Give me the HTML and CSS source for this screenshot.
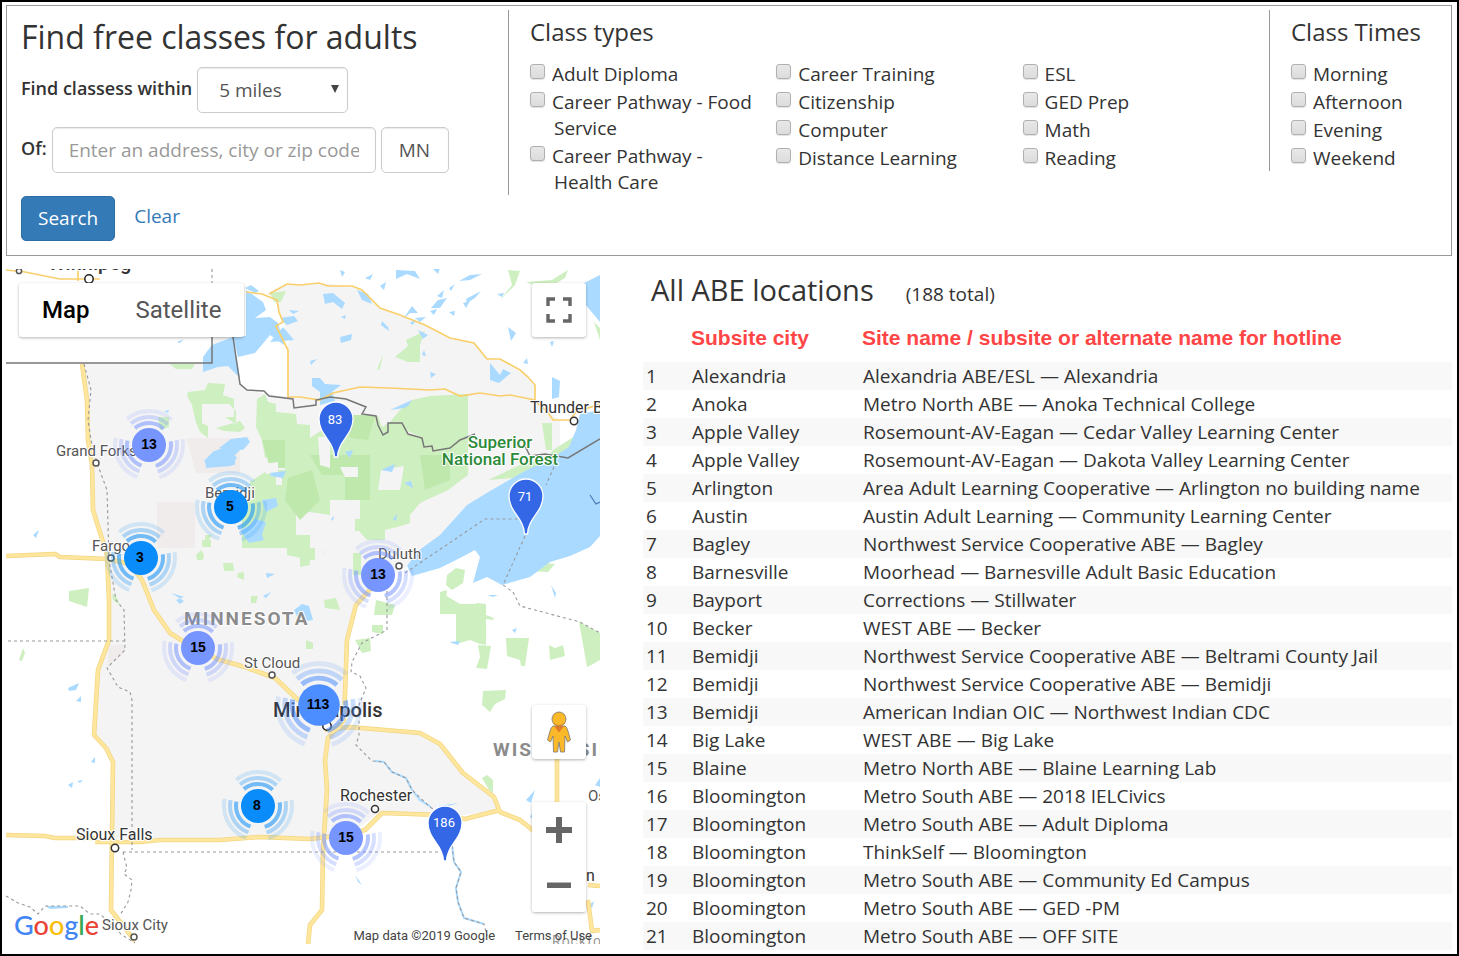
FILE: index.html
```html
<!DOCTYPE html>
<html lang="en">
<head>
<meta charset="utf-8">
<title>Find free classes for adults</title>
<link rel="stylesheet" href="styles.css">
</head>
<body>
<form class="finder" action="#">
  <div class="search">
    <h1 class="title">Find free classes for adults</h1>
    <div class="field-row">
      <label class="field-label" for="radius">Find classess within</label>
      <span class="select-wrap">
        <select class="control radius" id="radius"><option>5 miles</option><option>10 miles</option><option>25 miles</option></select>
      </span>
    </div>
    <div class="field-row">
      <label class="field-label" for="address">Of:</label>
      <input class="control address" id="address" type="text" placeholder="Enter an address, city or zip code">
      <input class="control state" type="text" value="MN" aria-label="State">
    </div>
    <div class="actions">
      <button class="submit" type="submit">Search</button>
      <a class="clear" href="#">Clear</a>
    </div>
  </div>
  <fieldset class="group">
    <legend class="group-title">Class types</legend>
    <div class="columns">
      <div class="checks">
        <label class="check"><input type="checkbox"> Adult Diploma</label>
        <label class="check"><input type="checkbox"> Career Pathway - Food Service</label>
        <label class="check"><input type="checkbox"> Career Pathway - Health Care</label>
      </div>
      <div class="checks">
        <label class="check"><input type="checkbox"> Career Training</label>
        <label class="check"><input type="checkbox"> Citizenship</label>
        <label class="check"><input type="checkbox"> Computer</label>
        <label class="check"><input type="checkbox"> Distance Learning</label>
      </div>
      <div class="checks">
        <label class="check"><input type="checkbox"> ESL</label>
        <label class="check"><input type="checkbox"> GED Prep</label>
        <label class="check"><input type="checkbox"> Math</label>
        <label class="check"><input type="checkbox"> Reading</label>
      </div>
    </div>
  </fieldset>
  <fieldset class="group">
    <legend class="group-title">Class Times</legend>
    <div class="checks">
      <label class="check"><input type="checkbox"> Morning</label>
      <label class="check"><input type="checkbox"> Afternoon</label>
      <label class="check"><input type="checkbox"> Evening</label>
      <label class="check"><input type="checkbox"> Weekend</label>
    </div>
  </fieldset>
</form>

<main class="results">
  <section class="map" aria-label="Map of class locations">
    <svg class="map-canvas" viewBox="6 269 594 675">
      <defs>
        <g id="cluster">
          <g fill="none" stroke="currentColor" stroke-dasharray="82 38" stroke-dashoffset="10">
            <circle r="22" stroke-width="4" opacity=".55" pathLength="360"/>
            <circle r="28" stroke-width="4" opacity=".3" pathLength="360"/>
            <circle r="34" stroke-width="4" opacity=".15" pathLength="360"/>
          </g>
          <circle r="17" fill="currentColor"/>
        </g>
        <path id="pin" d="M-1.500 0C-2-16-17-22-17-38A17 17 0 0 1 17-38C17-22 2-16 1.500 0Z" fill="#3367e6" stroke="#fff" stroke-width="1.3"/>
      </defs>
      <rect x="6" y="269" width="594" height="675" fill="#fff"/>

      <!-- highlighted land -->
      <path fill="#f4f4f4" d="M82 364H212V337H233L240 384 250 391 288 397 287 350 289 340 283 322 276 300 268 293 287 284H300L320 283 352 286 362 290 380 308 400 315 425 325 450 338 474 343 487 358 500 359 520 372 528 377 535 385V400L545 410 560 420V455L500 490 430 545 405 568 375 580 355 605 345 640 343 727 420 735 440 745 465 775 495 798 500 811 445 817 380 812 345 838H113V760L94 735 97 670 108 640 108 560 92 500Z"/>
      <path fill="#f0eceb" d="M186 438H240V473H196ZM157 502H195V548H157ZM108 645H125V652L108 667Z"/>

      <!-- forests and parks -->
      <g fill="#ceefc0">
        <path d="M170 364H195L192 369H176ZM188 392 205 390 208 383 225 384 223 395 234 399V417H225L236 424 236 411 229 404H202V423L208 426V438L200 432 196 423 192 405 187 396ZM216 428 240 421 245 428 240 432 224 431ZM158 417H169V427L160 430ZM257 399 265 394 268 402 276 404V412L287 413 296 414 297 424 310 425V438L325 428 330 418H350L378 416 382 427 390 422 402 424 407 434 422 438 425 445 432 445 433 451 450 448 468 437V475L448 490 420 503 410 515V523L401 526 385 530V540H367L360 532V490L345 492V503L330 505V515L310 512 290 516 285 510 268 515 255 505 250 492V482L268 470H285L284 450 265 458 262 440 256 427ZM390 422 400 410 412 400 430 396 468 394V444L450 448 435 451 424 444 420 437Z"/>
        <path d="M242 500H258L278 495 296 505V535H310V565L300 567V558L287 555V548H242ZM205 535H212L209 540H211V547H202V540H205ZM196 555 201 550 204 555 203 560H197ZM223 563H233L234 571H224ZM238 573 244 572V580L237 577ZM251 596H258L256 603H251ZM355 519H368V531H355ZM324 600 336 598 340 610 325 608ZM300 548H315V560H300ZM306 640 313 643V649H306ZM353 553H361V575H353ZM376 600 395 605 392 615H374ZM372 625H383V634L372 632ZM355 640 370 638 371 651 362 653ZM440 592 447 590 446 600 440 602V592L460 604H475L477 603 486 604V615L494 618 493 620 486 619V645L480 644 470 640 456 644V614H440ZM447 575 456 568 465 570 463 583 452 590 446 585ZM506 638H529L525 666H521L520 660 507 656ZM549 645 555 648 563 645 565 656 550 660ZM579 622 600 633V660L593 664 587 667ZM478 645 491 646 487 669 476 668 480 657ZM483 691 506 690 505 699 495 704 490 712 482 705ZM69 591 89 588 87 607 78 604 69 601ZM23 648 25 653 22 661 19 660ZM482 778 487 775 493 780V793L489 790ZM112 594 116 596 120 605 113 600ZM553 450 575 436 570 449 560 457 545 460Z"/>
        <path d="M488 480 522 464 545 459 530 470 515 478ZM576 470 587 456 600 451V462L586 468ZM530 571 545 563 555 564 548 572ZM270 293 286 291 281 302 274 302ZM395 357 408 346 406 340 425 331 420 345V362H408ZM377 370 383 354 380 369ZM500 300 512 285 508 270 520 271 515 285ZM526 282 552 280 568 270 565 278 545 290ZM594 322 600 328V340ZM542 423H552V450H546Z"/>
      </g>
      <g fill="#bfe8ad">
        <path d="M310 455H370V500H345V475H322ZM288 478 312 470 320 500 300 520 285 500ZM420 455H450V480L425 490ZM262 440H285V468H270ZM345 415H375L368 440 350 438Z"/>
      </g>
      <path fill="#f4f4f4" d="M340 467 358 467V477H345ZM381 470 404 466 400 490H378ZM318 437H330V468L320 465ZM262 464 278 462V472L266 474ZM330 500H348V508H330ZM276 472H282V485H276Z"/>

      <!-- lakes -->
      <g fill="#aadaff">
        <path d="M600 410 580 414 576 430 569 447 553 457 525 471 490 491 467 505 440 535 418 551 407 566 412 576 440 568 462 557 475 550 480 557 473 583 487 577 502 585 530 577 550 562 570 556 590 547 600 536Z"/>
        <path d="M212 345 233 337 240 378 228 366 218 367 203 372V357L208 350ZM233 337 246 336V290L263 302 266 310 255 318 270 317 278 323 284 345 270 335 255 353 238 357ZM204 461 213 452 224 447 240 450 225 465 235 461 235 465H207ZM219 448 231 439 247 437 250 442 243 450 228 449Z"/>
        <path d="M205 460 214 451 229 450 237 458 231 466 206 468ZM240 530 250 525 255 519 266 522 262 535 264 540 249 543ZM262 500 276 498 278 506 266 512ZM294 610 302 604 309 606 313 620 300 622ZM270 473 286 471 283 478 271 476ZM312 378H320L325 384 341 385 332 392 335 401 320 405V392L312 386ZM323 294 333 293 345 303 342 309 333 302 325 304ZM357 290 368 294 372 304 362 300ZM382 321 388 327 389 331 381 325ZM340 337 352 334 351 340 341 343ZM403 319 412 306 418 313 410 313ZM396 270 415 271 420 279 407 274 396 279ZM459 281 470 275 482 274 470 280ZM466 299 481 291 475 298 467 303ZM490 363 500 375 503 369 511 373 499 383 490 380ZM497 294 504 293 502 297ZM572 289 600 275V322L590 310ZM508 327 516 333 511 341ZM523 363 527 358 528 364ZM552 377 560 381 559 397 552 399ZM431 308 438 300 447 298 440 308ZM431 267 440 268 438 274ZM449 312 455 311 454 316ZM289 310 299 311 293 314ZM251 285 259 291 255 293 245 288ZM280 318 294 316 298 321 287 325ZM177 342 184 339 180 343ZM270 342 283 327 294 340ZM393 519 397 514 396 521ZM331 519 334 516 333 521ZM322 556 327 547 324 553ZM512 630 517 628 515 633ZM449 642 460 641 458 645ZM551 585 556 593 555 598ZM487 595 498 595 493 597ZM33 535 39 530 36 538ZM171 593 184 601 180 604 176 600 184 597ZM266 573 275 574 267 578ZM263 596 271 592 266 598ZM68 688 79 683 76 690 69 691ZM76 701 81 696 81 702ZM91 762 95 757V763ZM68 785 73 782 72 788ZM77 781 83 780 80 783ZM526 800 535 790 531 803ZM530 817 534 810V820ZM595 785 600 778V787ZM355 875 362 885 358 882ZM589 905 594 901 592 908ZM45 906H68V908L50 909ZM437 806 459 803 445 807ZM164 411 169 410 168 413ZM390 410 412 400 408 406 404 408ZM424 350 426 356 422 355ZM430 372 436 374 431 378ZM345 452 353 450 350 458ZM381 470 395 464 392 472ZM404 483 411 481 413 488Z"/>
        <path d="M410 323 416 319 413 325ZM415 318 426 317 420 322ZM418 330 428 335 423 339ZM340 270 345 272 342 277ZM365 278 373 274 370 280ZM380 286 386 282 384 290ZM437 296 444 290 442 298ZM449 288 455 284 451 291ZM430 311 437 309 434 315ZM463 303 470 301 466 308ZM310 361 317 359 311 365ZM341 317 346 315 345 319ZM550 342 554 341 552 347Z"/>
      </g>

      <!-- rivers -->
      <path fill="none" stroke="#aadaff" stroke-width="2" d="M375 761 384 762 392 772 406 778 412 790 420 800 431 807M452 845 454 862 461 872 456 888 458 902 464 918 484 924"/>

      <!-- thin roads -->
      <g fill="none" stroke="#f9cf6b" stroke-width="1.7">
        <path d="M6 270 25 272 60 279H100M78 269V281M246 292 262 294 277 300 279 312 283 322 276 326 288 350 288 397H300L320 400 333 393 342 391 360 387 390 388 430 390 445 389 460 396 480 393 500 396 510 395 525 398 535 400V385L528 377 520 370 500 359H487L474 343 450 338 425 325 400 315 380 308 362 290 352 286H328L319 283 300 285 287 284 269 294M537 403 547 411 553 420 570 420 576 412 600 404"/>
      </g>

      <!-- highways -->
      <g fill="none" stroke-linejoin="round">
        <g stroke="#f3d583" stroke-width="4.6">
          <path d="M82 364 87 400 88 440 92 465 93 510 107 555 109 600V640L98 670 94 735 106 748 113 762 112 835 111 910 135 941"/>
          <path d="M6 556 55 554 60 557 108 559 130 564 142 580 154 610 170 633 197 650 220 660 245 667 275 678 295 697 315 715 325 722"/>
          <path d="M376 583 356 605 347 640 344 720 328 738 325 760 327 790 323 850 322 910 310 925 308 944"/>
          <path d="M325 730 350 727 420 733 440 744 463 773 494 797 500 812 520 820 535 832M6 835 45 836 55 838H95M95 842H140L160 840 220 840 260 837 310 839 345 835 365 830 382 813 440 815 465 819 500 810M557 758V802M588 885 600 886M588 900 592 931 600 930"/>
        </g>
        <g stroke="#fee69c" stroke-width="3.2">
          <path d="M82 364 87 400 88 440 92 465 93 510 107 555 109 600V640L98 670 94 735 106 748 113 762 112 835 111 910 135 941"/>
          <path d="M6 556 55 554 60 557 108 559 130 564 142 580 154 610 170 633 197 650 220 660 245 667 275 678 295 697 315 715 325 722"/>
          <path d="M376 583 356 605 347 640 344 720 328 738 325 760 327 790 323 850 322 910 310 925 308 944"/>
          <path d="M325 730 350 727 420 733 440 744 463 773 494 797 500 812 520 820 535 832M6 835 45 836 55 838H95M95 842H140L160 840 220 840 260 837 310 839 345 835 365 830 382 813 440 815 465 819 500 810M557 758V802M588 885 600 886M588 900 592 931 600 930"/>
        </g>
      </g>

      <!-- borders -->
      <path fill="none" stroke="#777" stroke-width="1.5" d="M6 363H212V337M233 337 240 384 247 390 264 391 269 396 293 399 294 408 316 405 316 400 330 397 346 399 366 407 362 414 376 416 378 425 383 435 388 432 388 423 402 423 408 434 422 438 424 447 432 446 433 451 450 448 460 440 475 434M525 446 530 456 545 454 568 458 600 439"/>
      <g fill="none" stroke="#999" stroke-width="1.1" stroke-dasharray="3 3">
        <path d="M212 269V283M84 364 91 390 88 420 91 440 97 463 107 490 109 560 116 600 124 610 125 650 107 668 118 687 130 692 132 700V850M8 641H125M123 852H445M123 852 127 868 124 874 132 880 131 890 128 902 120 915M6 896 18 903 30 907 38 914 45 906 80 906 90 914 100 914 122 935 135 943M405 573 485 519H520M554 467 546 485M525 536 503 585 513 592 520 606 580 622 600 633M387 585V630L362 643 352 662 351 672 360 676 366 688 359 705V735L356 745 372 761 384 762 392 772 406 778 412 790 430 807 447 818 452 845 454 862 461 872 456 888 458 902 464 918 484 924 487 936"/>
      </g>
      <path fill="none" stroke="#4d79b8" stroke-width="1.2" d="M590 495 596 504 600 502"/>

      <!-- place labels -->
      <g class="places">
        <text class="city-bold" x="48" y="270">Winnipeg</text>
        <text x="56" y="456" class="town">Grand Forks</text>
        <text x="205" y="498" class="town">Bemidji</text>
        <text x="92" y="551" class="town">Fargo</text>
        <text x="378" y="559" class="town">Duluth</text>
        <text x="244" y="668" class="town">St Cloud</text>
        <text x="102" y="930" class="town">Sioux City</text>
        <text x="530" y="413" class="city">Thunder B</text>
        <text x="76" y="840" class="city">Sioux Falls</text>
        <text x="340" y="801" class="city">Rochester</text>
        <text x="588" y="801" class="town">Os</text>
        <text x="586" y="881" class="city">n</text>
        <text x="552" y="946" class="faint">Rockford</text>
        <text x="273" y="717" class="city-bold">Minneapolis</text>
        <text x="184" y="625" class="state-name">MINNESOTA</text>
        <text x="493" y="756" class="state-name">WISCONSIN</text>
        <text x="500" y="448" class="forest" text-anchor="middle">Superior</text>
        <text x="500" y="465" class="forest" text-anchor="middle">National Forest</text>
      </g>
      <g fill="#fff" stroke="#555" stroke-width="1.5">
        <circle cx="19" cy="271" r="2.6"/><circle cx="89" cy="279" r="4.2" stroke="#222"/><circle cx="96" cy="463" r="3"/><circle cx="111" cy="558" r="3"/><circle cx="399" cy="566" r="3"/><circle cx="272" cy="675" r="3"/><circle cx="134" cy="937" r="3"/><circle cx="574" cy="421" r="3.7" stroke="#333"/><circle cx="115" cy="848" r="3.7" stroke="#333"/><circle cx="375" cy="809" r="3.5" stroke="#333"/><circle cx="327" cy="726" r="4.2" stroke="#222"/>
      </g>

      <!-- clusters and pins -->
      <g class="cluster-violet">
        <use href="#cluster" x="149" y="445"/><use href="#cluster" x="378" y="575"/><use href="#cluster" x="198" y="648"/><use href="#cluster" x="346" y="838"/>
      </g>
      <g class="cluster-blue">
        <use href="#cluster" x="231" y="507"/><use href="#cluster" x="141" y="558"/><use href="#cluster" x="258" y="806"/>
      </g>
      <g class="cluster-large"><use href="#cluster" transform="translate(319 705) scale(1.22)"/></g>
      <g class="count">
        <text x="149" y="449">13</text><text x="378" y="579">13</text><text x="198" y="652">15</text><text x="346" y="842">15</text><text x="230" y="511">5</text><text x="140" y="562">3</text><text x="257" y="810">8</text><text x="318" y="709">113</text>
      </g>
      <use href="#pin" x="336" y="457"/><use href="#pin" x="526" y="534"/><use href="#pin" x="445" y="861"/>
      <g class="pin-count">
        <text x="335" y="424">83</text><text x="525" y="501">71</text><text x="444" y="827">186</text>
      </g>
    </svg>
    <div class="map-types">
      <button class="map-type map-type-on" type="button">Map</button>
      <button class="map-type" type="button">Satellite</button>
    </div>
    <button class="map-button fullscreen" type="button" aria-label="Toggle fullscreen view">
      <svg width="26" height="26" viewBox="0 0 26 26" fill="none" stroke="#666" stroke-width="3.4"><path d="M2 9V2H9M17 2H24V9M24 17V24H17M9 24H2V17"/></svg>
    </button>
    <div class="map-tools">
      <button class="map-button" type="button" aria-label="Show Street View coverage">
        <svg width="26" height="42" viewBox="0 0 26 42"><path d="M7 15H19Q21 16 22 20L24.500 29 21.500 31 19 25 18.500 41H14.500L13 31 11.500 41H7.500L7 25 4.500 31 1.500 29 4 20Q5 16 7 15Z" fill="#fbb829" stroke="#777" stroke-width=".8"/><path d="M8 15H18L13 21.500Z" fill="#e07b2c"/><circle cx="13" cy="8" r="7" fill="#fbb829" stroke="#777" stroke-width=".8"/><path d="M7 12Q13 17 19 12" stroke="#d98d1f" fill="none"/></svg>
      </button>
      <div class="zoom">
        <button class="zoom-button" type="button" aria-label="Zoom in"><svg width="26" height="26" viewBox="0 0 26 26"><path d="M10 0H16V10H26V16H16V26H10V16H0V10H10Z" fill="#666"/></svg></button>
        <button class="zoom-button" type="button" aria-label="Zoom out"><svg width="26" height="26" viewBox="0 0 26 26"><path d="M1 10.500H25V16H1Z" fill="#666"/></svg></button>
      </div>
    </div>
    <a class="google" href="#" aria-label="Google"><span class="g-blue">G</span><span class="g-red">o</span><span class="g-yellow">o</span><span class="g-blue">g</span><span class="g-green">l</span><span class="g-red">e</span></a>
    <div class="credits"><span>Map data ©2019 Google</span><a href="#">Terms of Use</a></div>
  </section>

  <section class="locations">
    <header class="locations-head">
      <h2 class="locations-title">All ABE locations</h2>
      <span>(188 total)</span>
    </header>
    <table class="list">
      <thead><tr><th class="col-num" aria-label="Number"></th><th class="col-city">Subsite city</th><th>Site name / subsite or alternate name for hotline</th></tr></thead>
      <tbody>
        <tr><td>1</td><td>Alexandria</td><td>Alexandria ABE/ESL — Alexandria</td></tr>
        <tr><td>2</td><td>Anoka</td><td>Metro North ABE — Anoka Technical College</td></tr>
        <tr><td>3</td><td>Apple Valley</td><td>Rosemount-AV-Eagan — Cedar Valley Learning Center</td></tr>
        <tr><td>4</td><td>Apple Valley</td><td>Rosemount-AV-Eagan — Dakota Valley Learning Center</td></tr>
        <tr><td>5</td><td>Arlington</td><td>Area Adult Learning Cooperative — Arlington no building name</td></tr>
        <tr><td>6</td><td>Austin</td><td>Austin Adult Learning — Community Learning Center</td></tr>
        <tr><td>7</td><td>Bagley</td><td>Northwest Service Cooperative ABE — Bagley</td></tr>
        <tr><td>8</td><td>Barnesville</td><td>Moorhead — Barnesville Adult Basic Education</td></tr>
        <tr><td>9</td><td>Bayport</td><td>Corrections — Stillwater</td></tr>
        <tr><td>10</td><td>Becker</td><td>WEST ABE — Becker</td></tr>
        <tr><td>11</td><td>Bemidji</td><td>Northwest Service Cooperative ABE — Beltrami County Jail</td></tr>
        <tr><td>12</td><td>Bemidji</td><td>Northwest Service Cooperative ABE — Bemidji</td></tr>
        <tr><td>13</td><td>Bemidji</td><td>American Indian OIC — Northwest Indian CDC</td></tr>
        <tr><td>14</td><td>Big Lake</td><td>WEST ABE — Big Lake</td></tr>
        <tr><td>15</td><td>Blaine</td><td>Metro North ABE — Blaine Learning Lab</td></tr>
        <tr><td>16</td><td>Bloomington</td><td>Metro South ABE — 2018 IELCivics</td></tr>
        <tr><td>17</td><td>Bloomington</td><td>Metro South ABE — Adult Diploma</td></tr>
        <tr><td>18</td><td>Bloomington</td><td>ThinkSelf — Bloomington</td></tr>
        <tr><td>19</td><td>Bloomington</td><td>Metro South ABE — Community Ed Campus</td></tr>
        <tr><td>20</td><td>Bloomington</td><td>Metro South ABE — GED -PM</td></tr>
        <tr><td>21</td><td>Bloomington</td><td>Metro South ABE — OFF SITE</td></tr>
      </tbody>
    </table>
  </section>
</main>
</body>
</html>
```

FILE: styles.css
```css
*, *::before, *::after { box-sizing: border-box; }

body {
  margin: 0;
  min-height: 100vh;
  padding: 3px 5px 2px 4px;
  border: 2px solid #000;
  background: #fff;
  color: #333;
  font: 400 19px/26px "Open Sans", "Noto Sans", sans-serif;
}

h1, h2 { margin: 0; font-weight: 400; }

.finder {
  display: grid;
  grid-template-columns: 501fr 761fr 182fr;
  align-items: start;
  border: 1px solid #999;
  padding: 4px 0 14px;
}

.search { padding-left: 14px; }

.title { font-size: 32px; line-height: 54px; }

.field-row { display: flex; align-items: center; gap: 5px; margin: 3px 0 14px; }
.field-row + .field-row { margin: 0 0 23px; }

.field-label { font-weight: 600; font-size: 18px; padding-bottom: 4px; }

.control {
  height: 46px;
  border: 1px solid #ccc;
  border-radius: 5px;
  background: #fff;
  box-shadow: inset 0 1px 1px rgba(0, 0, 0, .08);
  color: #555;
  font: inherit;
  padding: 0 16px;
}
.control::placeholder { color: #999; opacity: 1; }

.select-wrap { position: relative; }
.select-wrap::after {
  content: "";
  position: absolute;
  right: 9px;
  top: 18px;
  border: 4px solid transparent;
  border-top: 8px solid #444;
  border-bottom: 0;
  pointer-events: none;
}
.radius { appearance: none; width: 151px; padding: 0 21px; display: block; }
.address { width: 324px; }
.state { width: 68px; padding: 0 17px; }

.actions { display: flex; align-items: center; gap: 19px; }
.submit {
  height: 45px;
  padding: 0 16px 2px;
  border: 1px solid #2e6da4;
  border-radius: 5px;
  background: #337ab7;
  color: #fff;
  font: inherit;
}
.clear { color: #337ab7; text-decoration: none; padding-bottom: 6px; }

.group {
  margin: 0;
  min-width: 0;
  border: 0;
  border-left: 1px solid #999;
  padding: 0 0 0 21px;
}
.group-title { float: left; width: 100%; padding: 0; font-size: 24px; line-height: 44px; margin-bottom: 7px; }
.columns, .group-title + .checks { clear: both; }
.columns { display: grid; grid-template-columns: repeat(3, 1fr); }
.checks { display: grid; gap: 2px; align-content: start; }
.check { display: block; padding: 0 20px 0 24px; text-indent: -24px; }
.group-title + .checks .check { padding-right: 0; }
.check input {
  appearance: none;
  width: 15px;
  height: 15px;
  margin: 0 2px 0 0;
  vertical-align: 2px;
  border: 1px solid #b0b0b0;
  border-radius: 3px;
  background: linear-gradient(#e8e8e8, #dcdcdc);
  box-shadow: 0 1px 1px rgba(0, 0, 0, .12);
}

.results {
  display: grid;
  grid-template-columns: 594fr 809fr;
  gap: 43px;
  align-items: start;
  margin-top: 13px;
}

.map { position: relative; font-family: Roboto, sans-serif; }
.map-canvas { display: block; width: 100%; height: auto; }

.places text { paint-order: stroke; stroke: #fff; stroke-width: 2px; stroke-linejoin: round; }
.town { font-size: 15px; fill: #555; }
.city { font-size: 16px; fill: #333; }
.city-bold { font-size: 20px; font-weight: 500; fill: #333; }
.faint { font-size: 14px; fill: #999; letter-spacing: 1px; }
.state-name { font-size: 19px; font-weight: 700; fill: #8b8b8b; letter-spacing: 2px; }
.forest { font-size: 17px; font-weight: 500; fill: #2a8a38; }

.cluster-violet { color: #7795ff; }
.cluster-blue { color: #0a8cfa; }
.cluster-large { color: #4c8dff; }
.count { font: 700 14px "Liberation Sans", sans-serif; fill: #000; text-anchor: middle; }
.pin-count { font-size: 13px; fill: #fff; text-anchor: middle; }

.map-types { position: absolute; top: 14px; left: 13px; display: flex; background: #fff; border-radius: 3px; box-shadow: 0 1px 3px rgba(0, 0, 0, .3); }
.map-type { height: 54px; padding: 0 23px; border: 0; background: none; font: 400 24px Roboto, sans-serif; color: #565656; }
.map-type-on { font-weight: 500; color: #000; }

.map-button, .zoom-button {
  display: grid;
  place-items: center;
  width: 54px;
  height: 54px;
  padding: 0;
  border: 0;
  border-radius: 3px;
  background: #fff;
}
.map-button, .zoom { border-radius: 3px; background: #fff; box-shadow: 0 1px 3px rgba(0, 0, 0, .3); }
.fullscreen { position: absolute; top: 14px; right: 14px; }
.map-tools { position: absolute; right: 14px; bottom: 32px; display: grid; gap: 43px; }
.zoom-button { height: 55px; }

.google { position: absolute; left: 8px; bottom: 3px; font: 500 27px/32px Lato, sans-serif; text-decoration: none; }
.g-blue { color: #4285f4; }
.g-red { color: #ea4335; }
.g-yellow { color: #fbbc05; }
.g-green { color: #34a853; }

.credits { position: absolute; right: 8px; bottom: 0; display: flex; gap: 20px; font-size: 13px; line-height: 17px; color: #444; }
.credits a { color: inherit; text-decoration: none; }

.locations-head { display: flex; align-items: baseline; gap: 32px; padding-left: 8px; }
.locations-title { font-size: 29px; line-height: 42px; }

.list { width: 100%; border-collapse: collapse; table-layout: fixed; }
.list th {
  height: 51px;
  padding: 2px 3px 0 2px;
  text-align: left;
  font: 700 21px "Liberation Sans", Arial, sans-serif;
  color: #ff4545;
}
.list td { padding: 1px 3px; }
.col-num { width: 46px; }
.col-city { width: 171px; }
.list tbody tr:nth-child(odd) { background: #f8f8f8; }
```
